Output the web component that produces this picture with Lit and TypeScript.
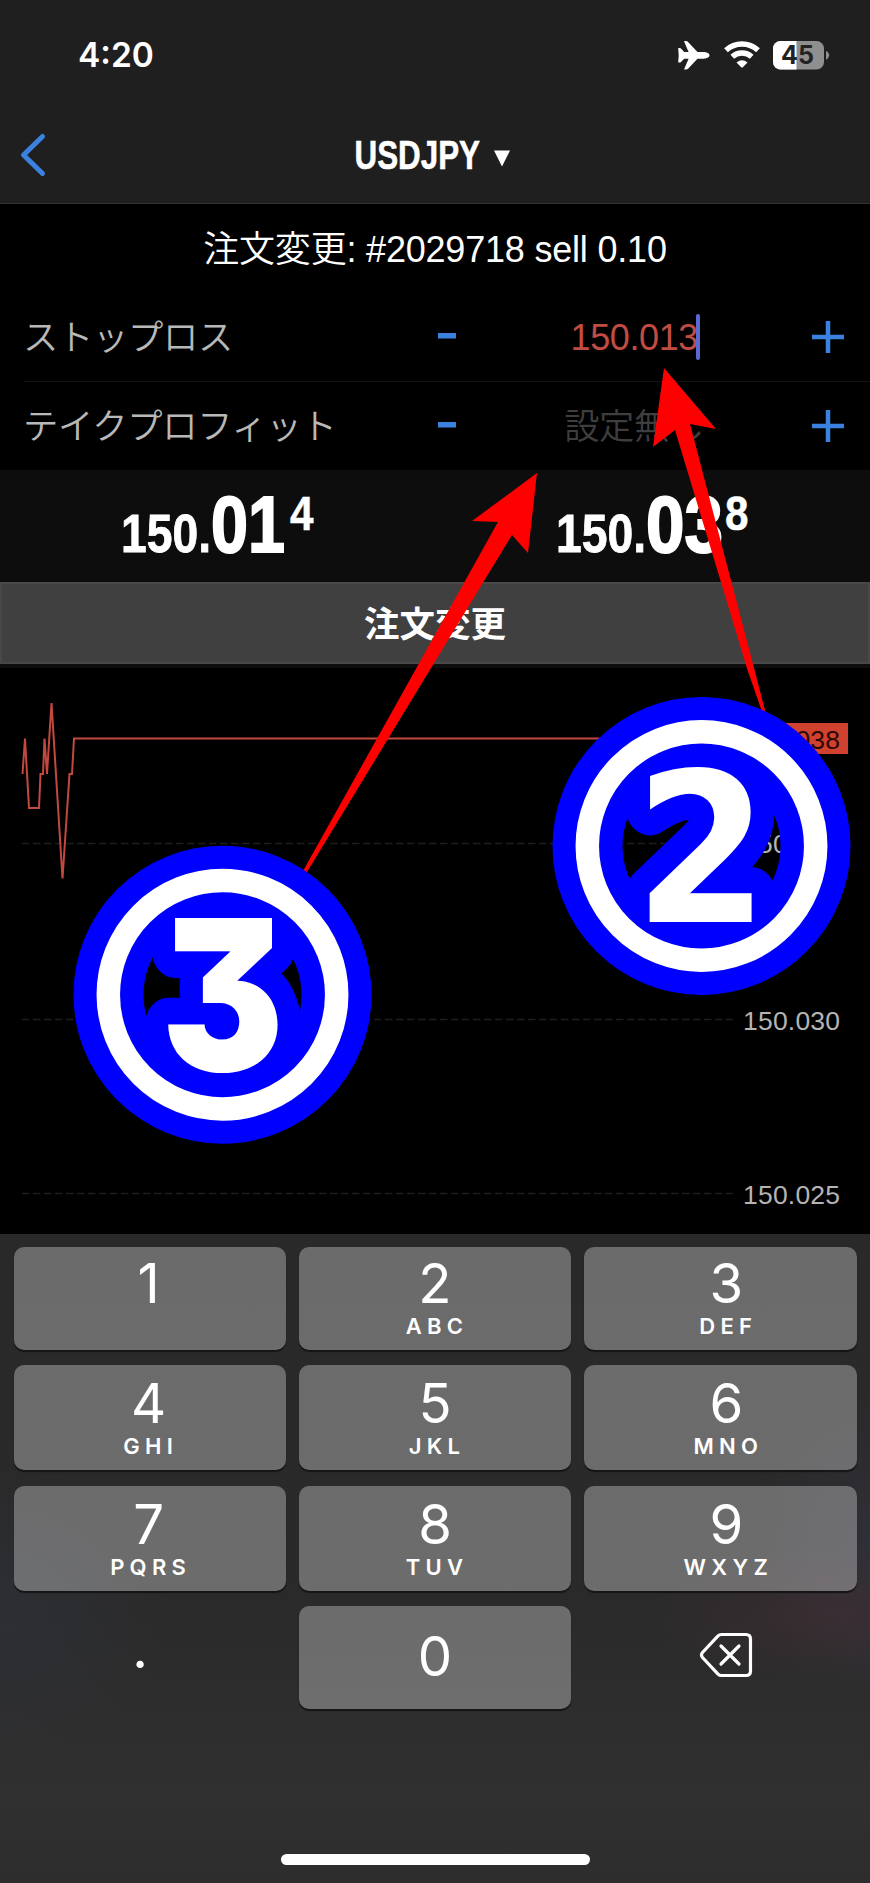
import { LitElement, html, svg, css } from "lit";
import { customElement } from "lit/decorators.js";

const KEYS = [
  ["1", ""], ["2", "ABC"], ["3", "DEF"],
  ["4", "GHI"], ["5", "JKL"], ["6", "MNO"],
  ["7", "PQRS"], ["8", "TUV"], ["9", "WXYZ"],
];

@customElement("app-root")
export class AppRoot extends LitElement {
  static styles = css`
    :host {
      display: block;
      position: relative;
      width: 870px;
      height: 1883px;
      overflow: hidden;
      background: #000;
      color: #fff;
      font-family: "Liberation Sans", "Noto Sans CJK JP", sans-serif;
    }
    * { box-sizing: border-box; }
    svg { display: block; flex: none; }
    .top { height: 204px; background: #1f1f1f; border-bottom: 1px solid #333; display: flex; flex-direction: column; }
    .status { height: 110px; display: flex; justify-content: space-between; align-items: center; padding: 0 40px 0 78px; }
    .clock { font: 600 33.5px/40px Inter, sans-serif; letter-spacing: 0; }
    .icons { display: flex; align-items: center; }
    .nav { height: 89px; display: grid; grid-template-columns: 100px 1fr 100px; align-items: center; }
    .title { display: flex; justify-content: center; }
    .subtitle { height: 88px; display: flex; align-items: center; justify-content: center; font-size: 36px; font-weight: 350; letter-spacing: -0.2px; padding-bottom: 4px; white-space: pre; }
    .row { height: 89px; display: grid; grid-template-columns: 412px 70px 1fr 58px; align-items: center; margin-left: 24px; }
    .row + .row { border-top: 1px solid #141414; }
    .label { font: 350 35.3px/50px "Noto Sans CJK JP", sans-serif; letter-spacing: -0.3px; color: #b8b8b8; padding-bottom: 4px; margin-left: -1px; }
    .value { display: flex; justify-content: center; align-items: center; font-size: 36px; letter-spacing: -0.4px; color: #c24c42; }
    .value.stop { padding-right: 47px; }
    .digits { padding-top: 2px; }
    .minus { margin-bottom: 2px; }
    .cursor { width: 4px; height: 46px; background: #5b69d2; border-radius: 2px; margin-left: -1.5px; }
    .value.empty { font: 350 35.3px/50px "Noto Sans CJK JP", sans-serif; color: #3e3e3e; padding: 0 50px 4px 0; }
    .prices { height: 112px; background: #0d0d0d; display: grid; grid-template-columns: 435px 435px; }
    .submit { height: 82px; background: #404040; border: 2px solid #484848; display: flex; align-items: center; justify-content: center; font: 700 35.5px/50px "Noto Sans CJK JP", sans-serif; padding-bottom: 2px; }
    .chart { height: 570px; border-top: 4px solid #0d0d0d; }
    .keyboard {
      height: 649px;
      display: flex;
      flex-direction: column;
      padding: 13px 13.5px 0;
      background:
        radial-gradient(ellipse 190px 70px at 830px 380px, rgba(90, 50, 60, 0.28), transparent),
        radial-gradient(ellipse 120px 160px at 870px 310px, rgba(60, 60, 85, 0.3), transparent),
        radial-gradient(ellipse 170px 150px at 0px 380px, rgba(50, 55, 70, 0.35), transparent),
        linear-gradient(#292929 0, #2a2a2a 380px, #303030 560px, #2d2d2d 100%);
    }
    .keys { display: grid; grid-template-columns: repeat(3, 1fr); column-gap: 13px; grid-template-rows: 103px 105px 105px 103px; row-gap: 15.3px; }
    .key { display: flex; flex-direction: column; align-items: center; background: rgba(255, 255, 255, 0.31); border-radius: 10px; box-shadow: 0 2px 1px #151515; padding-top: 5px; font-family: Inter, sans-serif; }
    .first { padding-top: 3px; }
    .zero { padding-top: 17px; }
    .plain { background: none; box-shadow: none; }
    .left { padding-right: 2px; }
    .third { padding-left: 12px; }
    .num { font-size: 54.5px; line-height: 66px; font-weight: 400; }
    .abc { font-size: 22px; line-height: 26px; margin-top: -3px; font-weight: 600; letter-spacing: 5.3px; margin-right: -4px; }
    .dot { padding: 9px 19px 0 0; }
    .back { padding-top: 26px; }
    .home { width: 309px; height: 11px; border-radius: 6px; background: #fff; margin: 145px auto 0; }
    .overlay { position: absolute; left: 0; top: 0; }
    .three { font-family: Inter, sans-serif; font-feature-settings: "cv09" 1; }
    .digit { vector-effect: non-scaling-stroke; }
  `;

  private plus() {
    return html`<svg width="32" height="32" viewBox="0 0 32 32"><path d="M16 0V32M0 16H32" stroke="#3b82e0" stroke-width="4.5"/></svg>`;
  }

  private price(big: string, bigWidth: number, sup: string) {
    return html`<svg width="435" height="112" viewBox="0 0 435 112" fill="#fff" stroke="#fff" font-family="Liberation Sans, sans-serif" font-weight="700">
      <text x="121" y="82" font-size="53" stroke-width="0.8" textLength="90" lengthAdjust="spacingAndGlyphs">150.</text>
      <text x="211" y="82" font-size="79" stroke-width="2" textLength=${bigWidth} lengthAdjust="spacingAndGlyphs">${big}</text>
      <text x="290" y="60" font-size="49" stroke-width="0.5" textLength="23.500" lengthAdjust="spacingAndGlyphs">${sup}</text>
    </svg>`;
  }

  private chart() {
    return html`<svg width="870" height="565" viewBox="0 668 870 565" font-family="Liberation Sans, sans-serif" font-size="26.5">
      <path d="M22 843.5H733M22 1019.5H733M22 1193.5H733" stroke="#1d1d1d" stroke-width="1.3" stroke-dasharray="7.5 3.5"/>
      <g fill="#b4b4b4">
        <text x="743" y="853" textLength="97">150.035</text>
        <text x="743" y="1029.500" textLength="97">150.030</text>
        <text x="743" y="1203.500" textLength="97">150.025</text>
      </g>
      <path d="M22.5 774L25 738.5L29 808H39L40.5 774H43L44.5 738.5L47 774L51.5 703L62.5 878.5L69.5 774H72L74 738.5H740" fill="none" stroke="#c4483e" stroke-width="2"/>
      <rect x="735" y="723" width="113" height="31" fill="#d1412f"/>
      <text x="743" y="748.500" textLength="97" fill="#2a0805">150.038</text>
    </svg>`;
  }

  private badge(cx: number, cy: number, digit: unknown) {
    return svg`<g transform="translate(${cx} ${cy})">
      <circle r="114" fill="none" stroke="#00f" stroke-width="70"/>
      ${digit}
      <circle r="114.2" fill="none" stroke="#fff" stroke-width="23.5"/>
    </g>`;
  }

  render() {
    return html`
      <header class="top">
        <div class="status">
          <span class="clock">4:20</span>
          <div class="icons">
            <svg width="152" height="32" viewBox="678 39 152 32">
              <path fill="#fff" d="M709.500 55.300C709.500 53.300 706.500 52 703.500 52H697.500L688.300 42.200Q687.300 41 685.800 41H684.600Q683.900 41 684.200 41.800L688.600 52H684.200L681 48.500Q680.500 48 679.600 48H678.600L678.200 48.500L678.700 55.300L678.200 62L678.600 62.600H679.600Q680.500 62.600 681 62L684.200 58.700H688.600L684.200 69Q683.900 69.600 684.600 69.600H685.800Q687.300 69.600 688.300 68.500L697.500 58.700H703.500C706.500 58.700 709.500 57.300 709.500 55.300Z"/>
              <g fill="none" stroke="#fff" stroke-width="5.500"><path d="M726 50.300A23.500 23.500 0 0 1 758 50.300"/><path d="M732.300 56.800A14.500 14.500 0 0 1 751.700 56.800"/></g>
              <path fill="#fff" d="M736.500 62.400Q742 58 747.500 62.400L742.800 67.300Q742 68 741.200 67.300Z"/>
              <clipPath id="cell"><rect x="773" y="41" width="51" height="28.500" rx="7.500"/></clipPath>
              <g clip-path="url(#cell)"><rect x="773" y="41" width="51" height="29" fill="#8f8f8f"/><rect x="773" y="41" width="23.500" height="29" fill="#fff"/></g>
              <path d="M826 51Q829.200 52.500 829.200 55.300T826 59.800Z" fill="#8f8f8f"/>
              <text x="797.500" y="64" text-anchor="middle" font-family="Inter, sans-serif" font-weight="700" font-size="25" fill="#222">45</text>
            </svg>
          </div>
        </div>
        <div class="nav">
          <svg width="50" height="46" viewBox="0 131 50 46"><path d="M42.500 135.500L23.500 154L42.500 172.500" fill="none" stroke="#3b82e0" stroke-width="5" stroke-linecap="round" stroke-linejoin="round"/></svg>
          <div class="title">
            <svg width="170" height="50" viewBox="350 130 170 50" fill="#fff">
              <text x="354.500" y="169" font-family="Liberation Sans, sans-serif" font-weight="700" font-size="41" stroke="#fff" stroke-width="0.6" textLength="125.500" lengthAdjust="spacingAndGlyphs">USDJPY</text>
              <path d="M494 150.500H510L502 166.500Z"/>
            </svg>
          </div>
        </div>
      </header>
      <div class="subtitle">注文変更: #2029718 sell 0.10</div>
      <div class="row">
        <span class="label">ストップロス</span>
        <svg class="minus" width="22" height="6"><rect x="2" width="18" height="5.500" fill="#3b82e0"/></svg>
        <span class="value stop"><span class="digits">150.013</span><i class="cursor"></i></span>
        ${this.plus()}
      </div>
      <div class="row">
        <span class="label">テイクプロフィット</span>
        <svg class="minus" width="22" height="6"><rect x="2" width="18" height="5.500" fill="#3b82e0"/></svg>
        <span class="value empty">設定無し</span>
        ${this.plus()}
      </div>
      <div class="prices">${this.price("01", 74, "4")}${this.price("03", 77, "8")}</div>
      <div class="submit">注文変更</div>
      <div class="chart">${this.chart()}</div>
      <div class="keyboard">
        <div class="keys">
          ${KEYS.map(([n, abc], i) => html`<div class="key ${i < 3 ? "first" : ""} ${["left", "", "third"][i % 3]}"><span class="num">${n}</span><span class="abc">${abc}</span></div>`)}
          <div class="key plain dot"><span class="num">.</span></div>
          <div class="key zero"><span class="num">0</span></div>
          <div class="key plain third back">
            <svg width="54" height="46" viewBox="0 0 54 46" fill="none" stroke="#fff" stroke-width="3.200" stroke-linecap="round" stroke-linejoin="round"><path d="M22.500 2.500H47Q51.500 2.500 51.500 7V39Q51.500 43.500 47 43.500H22.500Q20.500 43.500 18.800 41.800L3.500 25.500Q1.500 23 3.500 20.500L18.800 4.200Q20.500 2.500 22.500 2.500Z"/><path d="M22 14L40 32M40 14L22 32"/></svg>
          </div>
        </div>
        <div class="home"></div>
      </div>
      <svg class="overlay" width="870" height="1883" viewBox="0 0 870 1883">
        <path fill="#f00" d="M664 368L716 429L690 424L754.500 670L766.500 716H763.500L747.500 670L675 430L653 447Z"/>
        <path fill="#f00" d="M537 473L528 553L512 535L307 872L303 871L498 522L472 521Z"/>
        ${this.badge(701.5, 846, svg`<text class="digit" transform="scale(0.92 1)" x="0" y="76" text-anchor="middle" font-family="DejaVu Sans, sans-serif" font-weight="700" font-size="209" fill="#fff" stroke="#00f" stroke-width="50" stroke-linejoin="round" paint-order="stroke">2</text>`)}
        ${this.badge(222.5, 994.7, svg`<text class="three digit" transform="scale(0.87 1)" x="0" y="76" text-anchor="middle" font-weight="900" font-size="210" fill="#fff" stroke="#00f" stroke-width="50" stroke-linejoin="round" paint-order="stroke">3</text>`)}
      </svg>
    `;
  }
}
